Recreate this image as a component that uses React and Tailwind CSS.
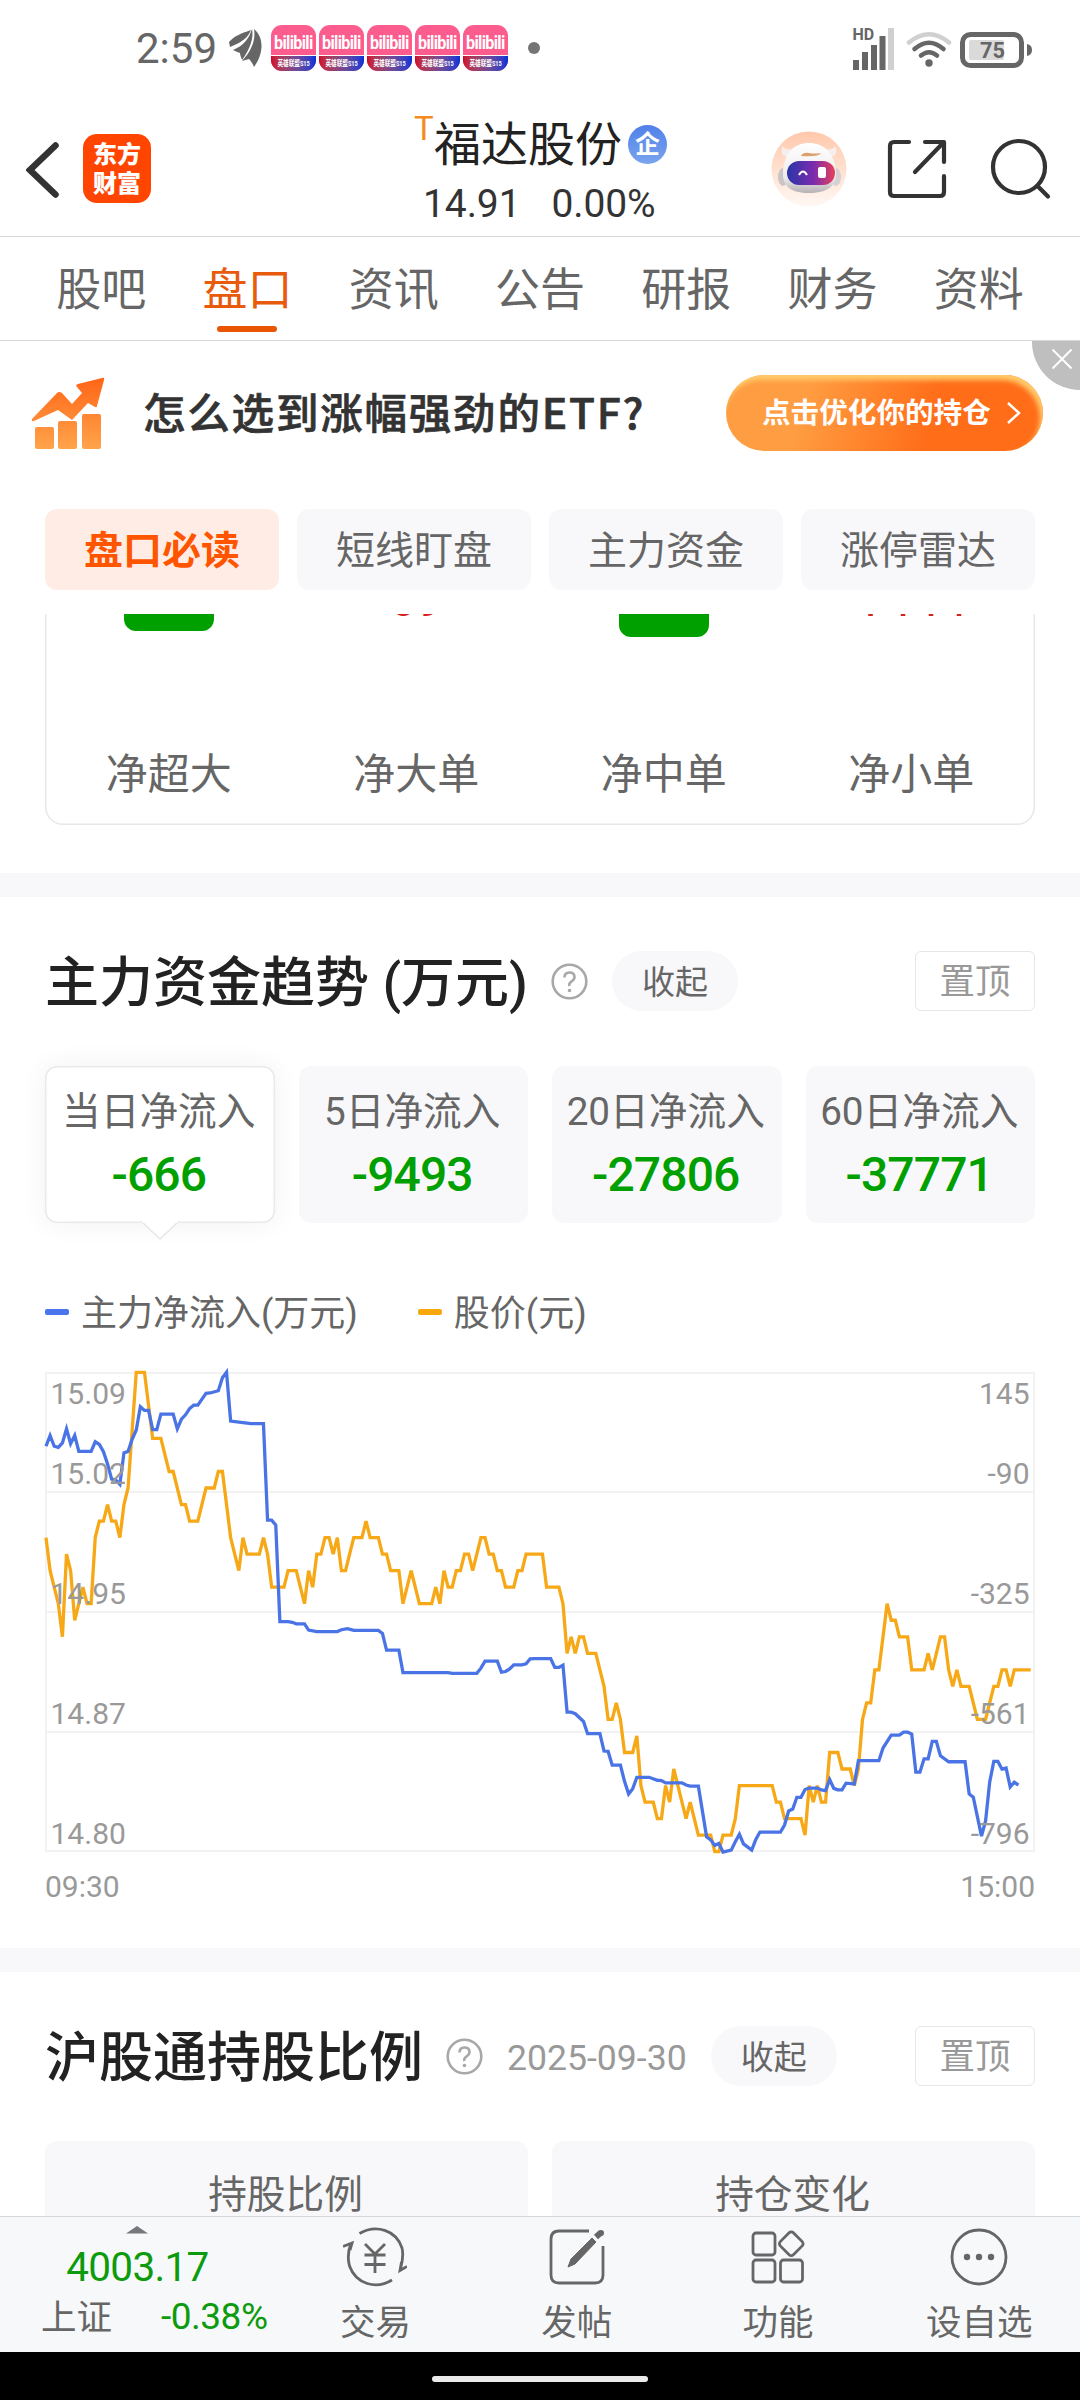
import { clsx } from "clsx";

const notifications = [1, 2, 3, 4, 5];
const navTabs = ["股吧", "盘口", "资讯", "公告", "研报", "财务", "资料"];
const subTabs = ["盘口必读", "短线盯盘", "主力资金", "涨停雷达"];
const periods = [
    { label: "当日净流入", value: "-666" },
    { label: "5日净流入", value: "-9493" },
    { label: "20日净流入", value: "-27806" },
    { label: "60日净流入", value: "-37771" },
];
const axisRows = [
    { price: "15.09", flow: "145" },
    { price: "15.02", flow: "-90" },
    { price: "14.95", flow: "-325" },
    { price: "14.87", flow: "-561" },
    { price: "14.80", flow: "-796" },
];

// [minute, ticks below the 15.09 high]
const priceSeries = [
    [0, 10], [1, 12], [3, 14], [4, 16], [5, 11], [6, 12], [7, 15], [8, 14], [9, 13], [10, 14], [11, 14],
    [12, 10], [13, 9], [14, 9], [15, 8], [16, 9], [17, 9], [18, 10], [19, 8], [20, 7], [22, 0], [24, 0],
    [26, 4], [28, 4], [30, 6], [31, 6], [33, 8], [34, 8], [35, 9], [37, 9], [39, 7], [41, 7], [42, 6],
    [43, 6], [45, 10], [47, 12], [48, 10], [49, 11], [52, 11], [53, 10], [54, 11], [55, 13], [58, 13],
    [59, 12], [61, 12], [63, 14], [64, 12], [65, 13], [66, 11], [67, 11], [68, 10], [69, 10], [70, 11],
    [71, 10], [72, 12], [73, 12], [75, 10], [77, 10], [78, 9], [79, 10], [81, 10], [82, 11], [83, 11],
    [84, 12], [86, 12], [87, 14], [89, 12], [91, 14], [94, 14], [95, 13], [96, 14], [97, 12], [98, 13],
    [99, 13], [100, 12], [101, 12], [102, 11], [103, 11], [104, 12], [106, 10], [107, 10], [108, 11],
    [109, 11], [110, 12], [111, 12], [112, 13], [114, 13], [115, 12], [116, 12], [117, 11], [121, 11],
    [122, 13], [125, 13], [126, 14], [127, 17], [128, 16], [129, 17], [130, 16], [131, 16], [132, 17],
    [134, 17], [136, 19], [137, 21], [138, 21], [139, 20], [140, 21], [141, 23], [143, 23], [144, 22],
    [145, 25], [146, 26], [148, 26], [149, 27], [150, 27], [151, 25], [152, 26], [153, 24], [155, 26],
    [156, 27], [157, 26], [159, 28], [162, 28], [163, 29], [164, 29], [165, 28], [167, 28], [168, 27],
    [169, 25], [177, 25], [178, 26], [179, 26], [180, 27], [184, 27], [185, 28], [186, 25], [187, 26],
    [188, 25], [189, 26], [190, 26], [191, 23], [193, 23], [194, 24], [196, 24], [197, 25], [198, 24],
    [199, 21], [200, 20], [201, 20], [202, 18], [203, 18], [205, 14], [206, 15], [207, 15], [208, 16],
    [210, 16], [211, 18], [214, 18], [215, 17], [216, 18], [218, 16], [219, 16], [220, 18], [221, 19],
    [222, 18], [223, 19], [225, 19], [227, 21], [229, 21], [231, 19], [232, 19], [233, 18], [234, 18],
    [235, 19], [236, 18], [240, 18],
];

// [minute, plot offset]
const flowSeries = [
    [0, 287], [1, 258], [2, 287], [3, 290], [4, 278], [5, 240], [6, 280], [7, 258], [8, 301], [11, 301],
    [12, 275], [13, 282], [14, 302], [15, 335], [16, 376], [17, 378], [18, 390], [19, 305], [20, 301],
    [21, 268], [22, 243], [23, 180], [24, 190], [25, 190], [26, 242], [27, 242], [28, 200], [31, 200],
    [32, 240], [33, 214], [34, 202], [35, 185], [36, 176], [37, 176], [39, 144], [40, 143], [42, 137],
    [43, 102], [44, 87], [45, 219], [48, 223], [50, 226], [53, 226], [54, 487], [55, 487], [56, 500],
    [57, 761], [59, 761], [60, 763], [61, 767], [63, 767], [64, 784], [66, 788], [71, 788], [72, 783],
    [73.5, 780], [75, 785], [81, 785], [82, 793], [83, 838], [86, 838], [87, 899], [98, 899], [99, 901],
    [105, 901], [106, 887], [107, 868], [110, 868], [111, 898], [112, 896], [113, 889], [114, 878],
    [116, 878], [117, 875], [118, 862], [119, 861], [123, 861], [124, 885], [125, 885], [126, 879],
    [127, 1006], [128, 1006], [129, 1010], [131, 1031], [132, 1064], [135, 1064], [136, 1111],
    [137, 1112], [138, 1149], [140, 1149], [141, 1193], [142, 1227], [143, 1213], [144, 1182],
    [147, 1182], [149, 1190], [150, 1191], [151, 1197], [155, 1197], [156, 1203], [157, 1206],
    [159, 1206], [161, 1343], [162, 1351], [163, 1366], [164, 1361], [165, 1384], [167, 1379],
    [168, 1356], [169, 1336], [170, 1362], [172, 1379], [173, 1350], [174, 1330], [179, 1330],
    [180, 1311], [181, 1273], [182, 1268], [183, 1236], [184, 1236], [185, 1215], [186, 1211],
    [188, 1211], [189, 1216], [190, 1218], [191, 1188], [192, 1212], [193, 1216], [194, 1216],
    [195, 1198], [197, 1200], [198, 1137], [203, 1137], [204, 1103], [206, 1068], [208, 1068],
    [209, 1060], [210, 1060], [211, 1065], [212, 1168], [213, 1168], [214, 1132], [215, 1132],
    [216, 1085], [217, 1085], [218, 1124], [220, 1140], [224, 1140], [225, 1227], [226, 1236],
    [228, 1341], [229, 1300], [230, 1195], [231, 1139], [232, 1139], [233, 1160], [234, 1157],
    [235, 1208], [236, 1195], [237, 1203],
];

const MINUTE = 4.103;
const TICK = 16.53;
const pricePoints = priceSeries.map(([m, t]) => `${m * MINUTE},${t * TICK - 0.7}`).join(" ");
const flowPoints = flowSeries.map(([m, y]) => `${m * MINUTE},${(y - 89) / 2.7034}`).join(" ");

const StatusBar = () => (
    <div className="flex h-[96px] shrink-0 items-center pl-[136px] pr-[47px] text-[#666]">
        <span className="mt-[2px] text-[42px] leading-none">2:59</span>
        <svg className="ml-[12px] h-[38px] w-[33px]" viewBox="0 0 33 38" fill="#666">
            <path d="M0 13C5 7 13 4 22 1C19 8 14 13 1 18Z" />
            <path d="M4 21C14 17 20 10 23 0C25 9 21 20 13 31C12 28 11 26 11 24Q8 23 4 21Z" />
            <path d="M25 0C36 9 34 26 25 38C24 35 22 32 20 30L13 32C22 22 27 12 25 0Z" />
        </svg>
        <div className="ml-[9px] flex gap-[3px]">
            {notifications.map((item) => (
                <div
                    key={item}
                    className="flex h-[46px] w-[45px] flex-col overflow-hidden rounded-[11px] bg-[#fc5c8e] text-center text-white"
                >
                    <div className="flex h-[31px] items-center justify-center border-b border-white pt-[5px] text-[17px] font-bold leading-none tracking-[-0.7px]">
                        <span className="scale-x-95 scale-y-110">bilibili</span>
                    </div>
                    <div className="flex flex-1 items-center justify-center whitespace-nowrap bg-linear-to-r from-[#d00028] to-[#0030d8] text-[7.5px] font-bold leading-none">
                        <span className="scale-x-75">英雄联盟S15</span>
                    </div>
                </div>
            ))}
        </div>
        <div className="ml-[20px] size-[12px] rounded-full bg-[#757575]" />
        <svg className="ml-auto h-[44px] w-[181px]" viewBox="0 0 181 44">
            <text x="0.500" y="13.500" fontSize="16" fontWeight="700" fill="#666">HD</text>
            <g fill="#666">
                <rect x="1" y="34" width="6" height="10" />
                <rect x="10" y="26" width="6" height="18" />
                <rect x="19" y="19" width="6" height="25" />
                <rect x="27.500" y="10" width="6" height="34" />
                <rect x="36" y="2" width="6" height="42" fill="#d0d0d0" />
                <circle cx="77" cy="37" r="3.700" />
            </g>
            <g fill="none" stroke="#666" strokeWidth="4.500" strokeLinecap="round">
                <path d="M57 16.500Q77 0 97 16.500" stroke="#d0d0d0" />
                <path d="M62.500 23Q77 10.500 91.500 23" />
                <path d="M69 29.500Q77 23 85 29.500" />
            </g>
            <rect x="110.500" y="8.500" width="59" height="31" rx="8" fill="none" stroke="#666" strokeWidth="5" />
            <rect x="117" y="14" width="35" height="20" rx="2" fill="#dadada" />
            <path d="M175 18q5 1 5 6t-5 6z" fill="#666" />
            <text x="128" y="32" fontSize="22.500" fontWeight="700" fill="#666" textLength="25" lengthAdjust="spacingAndGlyphs">75</text>
        </svg>
    </div>
);

const Header = () => (
    <header className="flex h-[141px] shrink-0 items-center border-b border-[#d8d8d8] pl-[26px] pr-[28px] pt-[5px]">
        <svg className="mt-[2px] h-[58px] w-[34px]" viewBox="0 0 34 58" fill="none" stroke="#333" strokeWidth="6.500" strokeLinecap="round">
            <path d="M29.500 4.500L4 29L29.500 53.500" strokeLinejoin="miter" />
        </svg>
        <div className="ml-[23px] flex h-[69px] w-[68px] flex-col items-center justify-center rounded-[14px] bg-[#ff4500] pt-[2px] text-[24px] font-black leading-[29px] text-white">
            <span>东方</span>
            <span>财富</span>
        </div>
        <div className="ml-[263px] flex w-[256px] flex-col">
            <div className="flex h-[62px] items-center">
                <span className="-mt-[32px] w-[20px] text-[33px] leading-none text-[#f58a1f]">T</span>
                <span className="whitespace-nowrap text-[47px] leading-none text-[#222]">福达股份</span>
                <span className="ml-[6px] flex size-[39px] shrink-0 items-center justify-center rounded-full bg-linear-to-b from-[#5080e8] to-[#7aa4ee] text-[25px] font-bold leading-none text-white">
                    企
                </span>
            </div>
            <div className="flex gap-[31px] pl-[9px] pt-[9px] text-[39px] leading-none tracking-[-0.1px] text-[#333]">
                <span>14.91</span>
                <span>0.00%</span>
            </div>
        </div>
        {/* assistant */}
        <svg className="ml-auto h-[78px] w-[76px]" viewBox="0 0 76 78">
            <defs>
                <linearGradient id="halo" x2="0" y2="1">
                    <stop stopColor="#ffc8ab" />
                    <stop offset="1" stopColor="#fff8f4" />
                </linearGradient>
                <linearGradient id="visor">
                    <stop stopColor="#2a35a8" />
                    <stop offset=".55" stopColor="#7a2cae" />
                    <stop offset="1" stopColor="#e8405a" />
                </linearGradient>
                <linearGradient id="helmet" x2="0" y2="1">
                    <stop stopColor="#fff" />
                    <stop offset=".7" stopColor="#eeeaea" />
                    <stop offset="1" stopColor="#b5b0b4" />
                </linearGradient>
            </defs>
            <circle cx="38" cy="39" r="37.500" fill="url(#halo)" />
            <path d="M17 27C10 26 9 21 12 16C14 20 18 19 23 20ZM59 27C66 26 67 21 64 16C62 20 58 19 53 20Z" fill="#f5eeec" />
            <ellipse cx="12" cy="47" rx="5" ry="9" fill="#c9c4c8" />
            <ellipse cx="65" cy="47" rx="5" ry="9" fill="#d5d0d4" />
            <path d="M12 42C13 22 24 13 38 13S64 22 65 42C66 57 55 63 38 63S11 57 12 42Z" fill="url(#helmet)" />
            <rect x="16" y="31" width="48" height="24" rx="12" fill="url(#visor)" />
            <path d="M28 45Q32 38 36 45" fill="none" stroke="#fff" strokeWidth="2" />
            <rect x="47" y="37" width="8" height="11" rx="2" fill="#fff" />
            <path d="M30 26Q32 22 38 23T50 23Q48 27 30 26Z" fill="#dda06a" />
        </svg>
        <svg className="ml-[40px] h-[62px] w-[60px]" viewBox="0 0 60 62" fill="none" stroke="#333" strokeWidth="4.200" strokeLinecap="round" strokeLinejoin="round">
            <path d="M22 4H7Q3 4 3 8V54Q3 58 7 58H53Q57 58 57 54V38" />
            <path d="M38 4H57V24M56 5L28 34" />
        </svg>
        <svg className="ml-[43px] h-[62px] w-[62px]" viewBox="0 0 62 62" fill="none" stroke="#333" strokeWidth="4.200" strokeLinecap="round">
            <circle cx="29" cy="29" r="26" />
            <path d="M47.500 48L58 58.500" />
        </svg>
    </header>
);

const NavTabs = () => (
    <nav className="flex h-[104px] shrink-0 border-b border-[#d8d8d8] px-[28px]">
        {navTabs.map((tab) => (
            <div
                key={tab}
                className={clsx(
                    "flex flex-1 flex-col items-center pt-[31px] text-[45px] leading-[45px]",
                    tab === "盘口" ? "text-[#e85a0c]" : "text-[#666]"
                )}
            >
                <span>{tab}</span>
                {tab === "盘口" && <div className="mt-[13px] h-[6px] w-[60px] rounded-full bg-[#ea5504]" />}
            </div>
        ))}
    </nav>
);

const Banner = () => (
    <div className="relative flex h-[144px] shrink-0 items-center pl-[31px] pr-[37px]">
        <svg className="h-[73px] w-[74px]" viewBox="0 0 74 73">
            <defs>
                <linearGradient id="growth" gradientUnits="userSpaceOnUse" x1="0" y1="0" x2="0" y2="73">
                    <stop stopColor="#ff6416" />
                    <stop offset="1" stopColor="#ffa54c" />
                </linearGradient>
            </defs>
            <g fill="url(#growth)">
                <rect x="4" y="50" width="19" height="22" rx="2" />
                <rect x="27" y="44" width="19" height="28" rx="2" />
                <rect x="51" y="37" width="19" height="35" rx="2" />
                <path d="M1 42Q0 45 3 44L27 33L41 43L57 26L64 30Q66 31 66 29L73 3Q74 0 71 1L47 7Q44 8 46 10L51 16L41 27L31 16Q28 14 26 16Z" />
            </g>
        </svg>
        <span className="ml-[38px] -mt-[3px] whitespace-nowrap font-['Noto_Sans_CJK_SC',sans-serif] text-[42.5px] font-medium leading-none tracking-[1.8px] text-[#333] [-webkit-text-stroke:0.7px_#333]">
            怎么选到涨幅强劲的ETF?
        </span>
        <button className="ml-auto flex h-[76px] w-[317px] items-center rounded-full bg-linear-[105deg,#ff9d42_25%,#ff6d18_65%] pl-[36px] shadow-[inset_-3px_5px_5px_#ffcb6c]">
            <span className="text-[28.6px] font-bold leading-none text-white">点击优化你的持仓</span>
            <svg className="ml-[15px] h-[26px] w-[16px]" viewBox="0 0 16 26" fill="none" stroke="#fff" strokeWidth="2.500">
                <path d="M2 3L13 13L2 23" />
            </svg>
        </button>
        <div className="absolute right-0 top-0 flex h-[49px] w-[48px] items-start justify-end rounded-bl-full bg-[#bfbfbf] pr-[7px] pt-[7px]">
            <svg className="size-[22px]" viewBox="0 0 22 22" stroke="#fff" strokeWidth="2">
                <path d="M1.500 1.500L20.500 20.500M20.500 1.500L1.500 20.500" />
            </svg>
        </div>
    </div>
);

const SubTabs = () => (
    <div className="grid h-[129px] shrink-0 grid-cols-4 gap-[18px] px-[45px] pt-[24px]">
        {subTabs.map((tab, index) => (
            <div
                key={tab}
                className={clsx(
                    "flex h-[81px] items-center justify-center rounded-[12px] pt-[4px] text-[39px] leading-none",
                    index === 0 ? "bg-[#ffede5] font-bold text-[#ff5500]" : "bg-[#f8f8fa] text-[#666]"
                )}
            >
                {tab}
            </div>
        ))}
    </div>
);

// lower part of the order-size bars, the rest is scrolled away
const OrderBars = () => (
    <div className="h-[259px] shrink-0 overflow-hidden px-[45px]">
        <div className="-mt-[6px] grid h-[217px] grid-cols-4 rounded-b-[18px] pt-[6px] text-[42px] leading-none text-[#666] shadow-[inset_0_0_0_1.5px_#e8e8e8]">
            <div className="flex flex-col items-center justify-between pb-[29px]">
                <div className="h-[17px] w-[90px] rounded-b-[12px] bg-[#00a000]" />
                <span>净超大</span>
            </div>
            <div className="flex flex-col items-center justify-between pb-[29px]">
                <span className="-mt-[38px] text-[48px] text-[#d8201c]">69</span>
                <span>净大单</span>
            </div>
            <div className="flex flex-col items-center justify-between pb-[29px]">
                <div className="h-[23px] w-[90px] rounded-b-[12px] bg-[#00a000]" />
                <span>净中单</span>
            </div>
            <div className="flex flex-col items-center justify-between pb-[29px]">
                <span className="-mt-[40px] text-[50px] text-[#d8201c]">1444</span>
                <span>净小单</span>
            </div>
        </div>
    </div>
);

const SectionTitle = ({ title, date }) => (
    <div className="flex h-[60px] items-center">
        <h2 className="mt-[5px] whitespace-nowrap text-[54px] font-medium leading-none text-[#222]">{title}</h2>
        <svg className="ml-[23px] size-[37px]" viewBox="0 0 37 37" fill="none" stroke="#a8a8a8" strokeWidth="2.600">
            <circle cx="18.500" cy="18.500" r="16.800" />
            <path d="M13.500 14.500Q13.500 9.500 18.500 9.500T23.500 14Q23.500 16.500 20.500 18.500T18.500 23" />
            <circle cx="18.500" cy="27.500" r="1.800" fill="#a8a8a8" stroke="none" />
        </svg>
        {date && <span className="ml-[24px] mt-[6px] text-[35.6px] leading-none text-[#999]">{date}</span>}
        <span className="ml-[24px] flex h-[60px] w-[126px] items-center justify-center rounded-full bg-[#f8f8fa] pt-[2px] text-[33px] leading-none text-[#666]">
            收起
        </span>
        <span className="ml-auto flex h-[60px] w-[120px] items-center justify-center rounded-[6px] border-[1.5px] border-[#e6e6e6] pt-[3px] text-[35.5px] leading-none text-[#999]">
            置顶
        </span>
    </div>
);

const TrendChart = () => (
    <div className="relative mt-[41px] h-[480px]">
        <svg className="absolute inset-0 h-[480px] w-[990px] overflow-visible" viewBox="-1 -1 990 480" fill="none">
            <path d="M0 0H988V478H0ZM0 119H988M0 239H988M0 359H988" stroke="#f2f2f2" strokeWidth="2" />
            <polyline points={pricePoints} stroke="#f7a816" strokeWidth="3.300" />
            <polyline points={flowPoints} stroke="#4a74e6" strokeWidth="3.300" />
        </svg>
        <div className="relative flex flex-col px-[5.5px] text-[30px] text-[#999]">
            {axisRows.map((row, index) => (
                <div
                    key={row.price}
                    className={clsx(
                        "flex w-full items-end justify-between pb-[6px] leading-[20px]",
                        index === 0 && "h-[38px]",
                        index === 1 && "h-[80px]",
                        index > 1 && "h-[120px]"
                    )}
                >
                    <span>{row.price}</span>
                    <span>{row.flow}</span>
                </div>
            ))}
        </div>
    </div>
);

const FundTrend = () => (
    <section className="h-[1075px] shrink-0 border-t-[24px] border-[#f8f8fa] px-[45px] pt-[54px]">
        <SectionTitle title="主力资金趋势 (万元)" />
        <div className="mt-[55px] grid grid-cols-4 gap-[24px]">
            {periods.map((item, index) => (
                <div
                    key={item.label}
                    className={clsx(
                        "relative flex h-[157px] flex-col items-center rounded-[12px] pr-[2px] pt-[26px]",
                        index === 0
                            ? "bg-white shadow-[inset_0_0_0_1.5px_#e9e9e9,0_0_28px_rgba(0,0,0,0.06)]"
                            : "bg-[#f8f8fa]"
                    )}
                >
                    <span className="whitespace-nowrap text-[38.7px] leading-[39px] text-[#666]">{item.label}</span>
                    <span className="mt-[20px] text-[48px] font-medium leading-[48px] tracking-[-0.9px] text-[#00a000]">{item.value}</span>
                    {index === 0 && (
                        <svg className="absolute left-[96px] top-[155px] h-[20px] w-[38px]" viewBox="0 0 38 20">
                            <path d="M0 0L19 18L38 0" fill="#fff" stroke="#e6e6e6" strokeWidth="1.500" />
                            <path d="M1 0H37" stroke="#fff" strokeWidth="3.500" />
                        </svg>
                    )}
                </div>
            ))}
        </div>
        <div className="mt-[71px] flex h-[37px] items-center text-[36px] leading-none text-[#666]">
            <i className="-mt-[2px] mr-[12px] h-[6px] w-[24px] rounded-[2px] bg-[#4a74ee]" />
            <span className="pt-[2px]">主力净流入(万元)</span>
            <i className="-mt-[2px] ml-[60px] mr-[12px] h-[6px] w-[24px] rounded-[2px] bg-[#f9a80c]" />
            <span className="pt-[2px]">股价(元)</span>
        </div>
        <TrendChart />
        <div className="mt-[21px] flex justify-between text-[30px] leading-[27px] text-[#999]">
            <span>09:30</span>
            <span>15:00</span>
        </div>
    </section>
);

const Holdings = () => (
    <section className="h-[268px] shrink-0 overflow-hidden border-t-[24px] border-[#f8f8fa] px-[45px] pt-[54px]">
        <SectionTitle title="沪股通持股比例" date="2025-09-30" />
        <div className="mt-[55px] grid grid-cols-2 gap-[24px] text-center text-[38.7px] leading-[39px] text-[#666]">
            <div className="h-[160px] rounded-[12px] bg-[#f8f8fa] pr-[2px] pt-[34px]">持股比例</div>
            <div className="h-[160px] rounded-[12px] bg-[#f8f8fa] pr-[2px] pt-[34px]">持仓变化</div>
        </div>
    </section>
);

const actions = [
    {
        label: "交易",
        icon: (
            <>
                <path d="M16.500 7.500C33 -2 53 4 59 22Q61 30 57.500 43M64 40.500L57 44.500L58.500 36" />
                <path d="M49 54C33 64 13 58 6.500 40Q3.500 29 8 17M0 20.500L9 17L7 24" />
                <path d="M22 18L32 28L42 18M32 28V47M21.500 29H42.500M21.500 38.500H42.500" />
            </>
        ),
    },
    {
        label: "发帖",
        icon: (
            <>
                <path d="M44 5H14Q6 5 6 13V49Q6 57 14 57H50Q58 57 58 49V20" />
                <path d="M23 41L26 33L47 12L51 16L30 38Z" fill="#666" stroke="#666" strokeWidth="1" />
                <path d="M51 11L56 6.500" strokeWidth="6" />
                <circle cx="56" cy="7" r="3" fill="#666" stroke="none" />
            </>
        ),
    },
    {
        label: "功能",
        icon: (
            <>
                <rect x="7" y="7" width="22" height="22" rx="3" />
                <rect x="7" y="34" width="22" height="22" rx="3" />
                <rect x="34.500" y="34" width="22" height="22" rx="3" />
                <rect x="36" y="8.500" width="18.500" height="18.500" rx="3" transform="rotate(45 45.250 17.750)" />
            </>
        ),
    },
    {
        label: "设自选",
        icon: (
            <>
                <circle cx="32" cy="31" r="27" />
                <g fill="#666" stroke="none">
                    <circle cx="20" cy="31" r="3.200" />
                    <circle cx="32" cy="31" r="3.200" />
                    <circle cx="44" cy="31" r="3.200" />
                </g>
            </>
        ),
    },
];

const BottomBar = () => (
    <footer className="flex h-[136px] shrink-0 border-t border-[#d4d7da] bg-[#f7f8fa]">
        <div className="flex w-[275px] flex-col items-center pt-[9px] leading-none">
            <svg className="h-[8px] w-[22px]" viewBox="0 0 22 8">
                <path d="M0 7.500L11 0L22 7.500Z" fill="#77787c" />
            </svg>
            <span className="mt-[13px] text-[40.5px] tracking-[-0.7px] text-[#0c9b0c]">4003.17</span>
            <div className="mt-[10px] flex w-full items-center pl-[41px]">
                <span className="pt-[3px] text-[35.5px] text-[#666]">上证</span>
                <span className="ml-[49px] text-[37px] tracking-[-0.5px] text-[#0c9b0c]">-0.38%</span>
            </div>
        </div>
        <div className="flex flex-1">
            {actions.map((item) => (
                <div key={item.label} className="flex w-[201.3px] shrink-0 flex-col items-center pt-[9px]">
                    <svg className="h-[64px] w-[64px]" viewBox="0 0 64 64" fill="none" stroke="#666" strokeWidth="2.800">
                        {item.icon}
                    </svg>
                    <span className="mt-[15px] text-[35.5px] leading-[36px] text-[#666]">{item.label}</span>
                </div>
            ))}
        </div>
    </footer>
);

const App = () => {
    return (
        <div className="flex h-[2400px] w-[1080px] flex-col overflow-hidden bg-white font-['Roboto','Noto_Sans_CJK_SC',sans-serif]">
            <StatusBar />
            <Header />
            <NavTabs />
            <Banner />
            <SubTabs />
            <OrderBars />
            <FundTrend />
            <Holdings />
            <BottomBar />
            <div className="flex h-[48px] shrink-0 items-center justify-center bg-black pt-[6px]">
                <div className="h-[6px] w-[216px] rounded-full bg-[#ebebeb]" />
            </div>
        </div>
    );
};

export default App;
